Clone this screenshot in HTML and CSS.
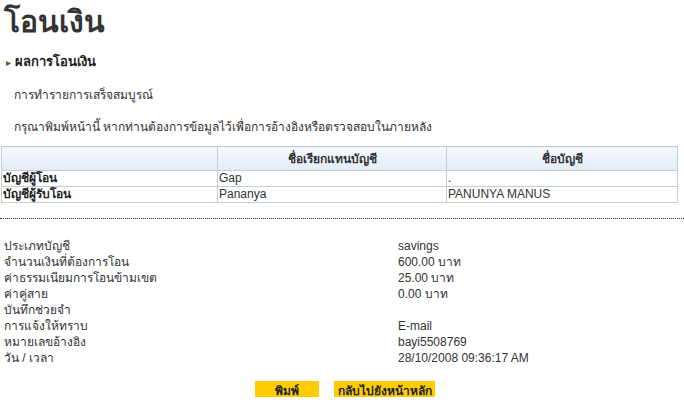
FILE: index.html
```html
<!DOCTYPE html>
<html lang="th">
  <head>
    <meta charset="UTF-8">
    <title>โอนเงิน</title>
    <link rel="stylesheet" href="styles.css">
  </head>
  <body>
    <h1 class="title">โอนเงิน</h1>
    <h2 class="section"><span class="arrow">&#9656;</span>ผลการโอนเงิน</h2>

    <p class="note">การทำรายการเสร็จสมบูรณ์</p>
    <p class="note">กรุณาพิมพ์หน้านี้ หากท่านต้องการข้อมูลไว้เพื่อการอ้างอิงหรือตรวจสอบในภายหลัง</p>

    <table class="accounts">
      <colgroup>
        <col class="col-type">
        <col class="col-nick">
        <col class="col-name">
      </colgroup>
      <thead>
        <tr>
          <th></th>
          <th>ชื่อเรียกแทนบัญชี</th>
          <th>ชื่อบัญชี</th>
        </tr>
      </thead>
      <tbody>
        <tr>
          <td class="label">บัญชีผู้โอน</td>
          <td>Gap</td>
          <td>.</td>
        </tr>
        <tr>
          <td class="label">บัญชีผู้รับโอน</td>
          <td>Pananya</td>
          <td>PANUNYA MANUS</td>
        </tr>
      </tbody>
    </table>

    <div class="divider"></div>

    <div class="details">
      <div>ประเภทบัญชี</div><div>savings</div>
      <div>จำนวนเงินที่ต้องการโอน</div><div>600.00 บาท</div>
      <div>ค่าธรรมเนียมการโอนข้ามเขต</div><div>25.00 บาท</div>
      <div>ค่าคู่สาย</div><div>0.00 บาท</div>
      <div>บันทึกช่วยจำ</div><div></div>
      <div>การแจ้งให้ทราบ</div><div>E-mail</div>
      <div>หมายเลขอ้างอิง</div><div>bayi5508769</div>
      <div>วัน / เวลา</div><div>28/10/2008 09:36:17 AM</div>
    </div>

    <div class="actions">
      <button class="btn btn-print">พิมพ์</button>
      <button class="btn btn-home">กลับไปยังหน้าหลัก</button>
    </div>
  </body>
</html>
```

FILE: styles.css
```css
body {
  margin: 0;
  font-family: Tahoma, "Liberation Sans", "DejaVu Sans", sans-serif;
  font-size: 12px;
  color: #333333;
  background-color: #ffffff;
}

.title {
  margin: 0;
  padding: 4px 0 0 4px;
  font-size: 30px;
  line-height: 36px;
  font-weight: bold;
  color: #333333;
}

.section {
  margin: 14px 0 0 0;
  padding-left: 6px;
  font-size: 13px;
  line-height: 16px;
  font-weight: bold;
  color: #222222;
}

.arrow {
  display: inline-block;
  width: 9px;
  font-size: 10px;
  color: #555555;
}

.note {
  margin: 16px 0 0 14px;
  line-height: 16px;
}

.accounts {
  margin: 11px 0 0 1px;
  width: 677px;
  table-layout: fixed;
  border-collapse: collapse;
  border: 1px solid #c3ccd8;
}

.col-type {
  width: 216px;
}

.col-nick {
  width: 229px;
}

.accounts th {
  height: 23px;
  padding: 0;
  text-align: center;
  font-weight: bold;
  color: #333333;
  background: linear-gradient(#f6f9fd, #e3ecf8);
  border: 1px solid #c3ccd8;
}

.accounts td {
  height: 15px;
  padding: 0 0 0 1px;
  line-height: 15px;
  border: 1px solid #c3ccd8;
  white-space: nowrap;
}

.accounts td.label {
  font-weight: bold;
  color: #222222;
}

.divider {
  margin-top: 15px;
  border-top: 1px dotted #333333;
}

.details {
  display: grid;
  grid-template-columns: 394px auto;
  margin: 19px 0 0 4px;
  line-height: 16px;
}

.actions {
  display: flex;
  justify-content: center;
  gap: 15px;
  margin-top: 15px;
  padding-left: 6px;
}

.btn {
  height: 16px;
  padding: 0;
  border: none;
  background-color: #ffcc00;
  font-family: inherit;
  font-size: 12px;
  font-weight: bold;
  color: #222222;
  cursor: pointer;
}

.btn-print {
  width: 64px;
}

.btn-home {
  width: 101px;
}
```
